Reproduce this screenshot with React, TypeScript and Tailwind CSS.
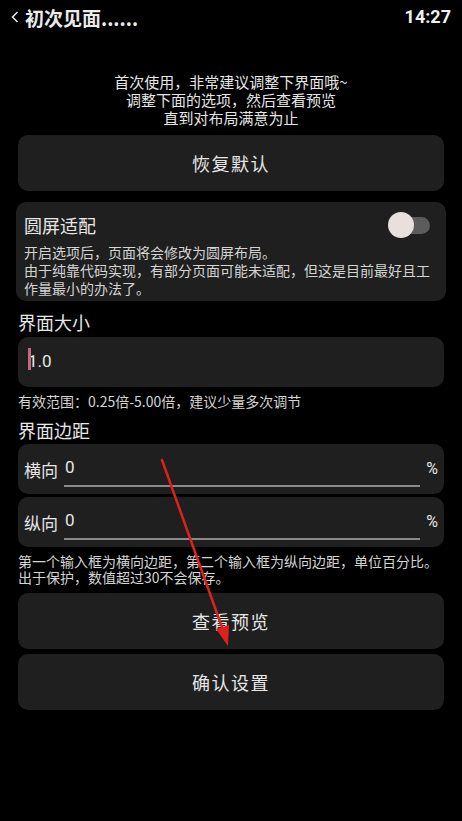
import React from "react";

const font = { fontFamily: '"Noto Sans CJK SC", "Noto Sans", sans-serif' };

function Btn({ label }: { label: string }) {
  return (
    <div className="mx-[18px] h-[56px] rounded-[10px] bg-[#1f1f1f] flex items-center justify-center text-[18px] tracking-[1.5px] text-[#e6e6e6]">
      {label}
    </div>
  );
}

function MarginRow({ label }: { label: string }) {
  return (
    <div className="mx-[18px] h-[50px] rounded-[10px] bg-[#1f1f1f] flex items-center pl-[6px] pr-[6px]">
      <span className="text-[17px] text-[#e6e6e6] leading-none">{label}</span>
      <div className="flex-1 ml-[6px] mr-[6px] h-[30px] flex items-center border-b-2 border-[#8a8a8a] mt-[6px]">
        <span className="text-[17px] text-[#e6e6e6] leading-none -mt-[8px] ml-[1px]" style={{ fontFamily: "Roboto, sans-serif" }}>0</span>
      </div>
      <span className="text-[16px] text-[#e6e6e6] leading-none" style={{ fontFamily: "Roboto, sans-serif" }}>%</span>
    </div>
  );
}

export default function App() {
  return (
    <div className="relative w-[462px] h-[821px] bg-black overflow-hidden text-white" style={font}>
      {/* header */}
      <div className="h-[34px] flex items-center justify-between pl-[11px] pr-[11px]">
        <div className="flex items-center">
          <svg width="8" height="12" viewBox="0 0 8 12" className="mr-[6px]">
            <path d="M6.5 1 L1.5 6 L6.5 11" stroke="#e6e6e6" strokeWidth="1.6" fill="none" />
          </svg>
          <span className="text-[19px] font-bold text-[#ececec] leading-none">初次见面......</span>
        </div>
        <span className="text-[18px] font-bold text-[#f0f0f0] leading-none" style={{ fontFamily: "Roboto, sans-serif" }}>14:27</span>
      </div>

      {/* intro */}
      <div className="mt-[39px] text-center text-[15px] leading-[18px] text-[#e6e6e6]">
        <div>首次使用，非常建议调整下界面哦~</div>
        <div>调整下面的选项，然后查看预览</div>
        <div>直到对布局满意为止</div>
      </div>

      <div className="mt-[8px]">
        <Btn label="恢复默认" />
      </div>

      {/* round screen card */}
      <div className="mt-[11px] mx-[16px] rounded-[10px] bg-[#1f1f1f] pt-[10px] pb-[4px] pl-[8px] pr-[14px]">
        <div className="flex items-center justify-between">
          <span className="text-[18px] leading-[26px] text-[#e6e6e6]">圆屏适配</span>
          <div className="relative w-[44px] h-[26px] flex items-center">
            <div className="absolute left-[8px] right-[2px] h-[17px] rounded-full bg-[#5c5c5c]" />
            <div className="absolute left-0 w-[26px] h-[26px] rounded-full bg-[#e8dfdf]" />
          </div>
        </div>
        <div className="mt-[5px] text-[14px] leading-[18px] text-[#d4d4d4]">
          <div>开启选项后，页面将会修改为圆屏布局。</div>
          <div>由于纯靠代码实现，有部分页面可能未适配，但这是目前最好且工作量最小的办法了。</div>
        </div>
      </div>

      {/* size */}
      <div className="mt-[9px] mx-[18px] text-[18px] leading-[24px] text-[#e6e6e6]">界面大小</div>
      <div className="mt-[3px] mx-[18px] h-[50px] rounded-[10px] bg-[#1f1f1f] flex items-center pl-[10px]">
        <div className="relative flex items-center">
          <span className="text-[17px] text-[#e6e6e6]" style={{ fontFamily: "Roboto, sans-serif" }}>1.0</span>
          <div className="absolute left-0 top-[-1px] w-[3px] h-[22px] bg-[#c76780]" />
        </div>
      </div>
      <div className="mt-[5px] mx-[18px] text-[14px] leading-[18px] text-[#d4d4d4]">有效范围：0.25倍-5.00倍，建议少量多次调节</div>

      {/* margins */}
      <div className="mt-[8px] mx-[18px] text-[18px] leading-[24px] text-[#e6e6e6]">界面边距</div>
      <div className="mt-[2px] flex flex-col gap-[3px]">
        <MarginRow label="横向" />
        <MarginRow label="纵向" />
      </div>
      <div className="mt-[6px] mx-[18px] text-[14px] leading-[16px] text-[#d4d4d4]">
        <div>第一个输入框为横向边距，第二个输入框为纵向边距，单位百分比。</div>
        <div>出于保护，数值超过30不会保存。</div>
      </div>

      <div className="mt-[8px] flex flex-col gap-[5px]">
        <Btn label="查看预览" />
        <Btn label="确认设置" />
      </div>

      {/* red annotation arrow */}
      <svg className="absolute left-0 top-0 pointer-events-none" width="462" height="821" viewBox="0 0 462 821">
        <line x1="162" y1="460" x2="223" y2="630" stroke="#e0201c" strokeWidth="2.5" strokeLinecap="round" />
        <polygon points="228,646 216,629 229,625" fill="#e0201c" />
      </svg>
    </div>
  );
}
